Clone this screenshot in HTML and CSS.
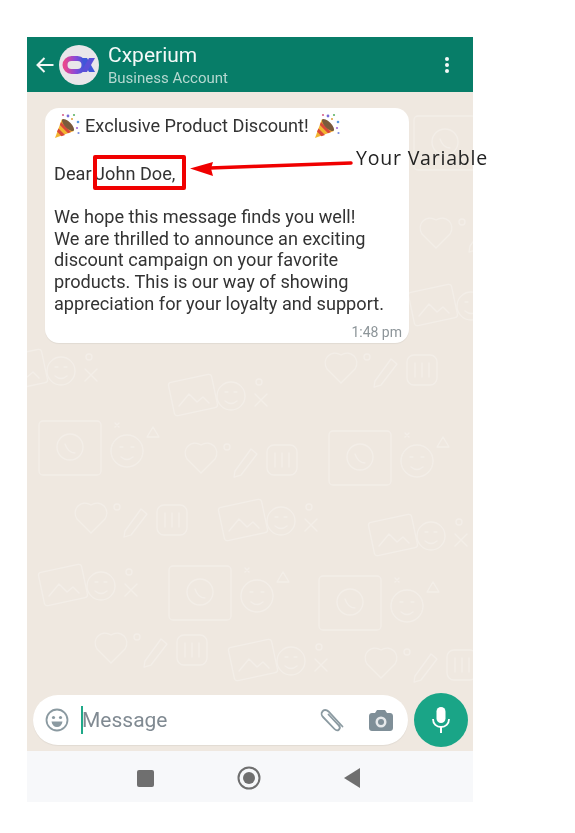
FILE: index.html
```html
<!DOCTYPE html>
<html lang="en">
<head>
  <meta charset="UTF-8">
  <title>Cxperium message preview</title>
  <link rel="stylesheet" href="styles.css">
</head>
<body>
  <svg class="defs" width="0" height="0">
    <defs>
      <g id="popper">
        <path d="M1 25 L8 6 L20 18 Z" fill="#f2b632"/>
        <path d="M4.500 15.500 L11 22 L7.500 23.300 L3 18.500 Z" fill="#d9483b"/>
        <path d="M7 9 L17 19 L14 20.200 L5.800 12 Z" fill="#d9483b"/>
        <ellipse cx="14" cy="12" rx="8" ry="3.200" transform="rotate(45 14 12)" fill="#7a5a3c"/>
        <circle cx="14" cy="3" r="1.400" fill="#7b6cd9"/>
        <circle cx="20" cy="2" r="1.100" fill="#5fb46a"/>
        <circle cx="24" cy="9" r="1.300" fill="#5a9be0"/>
        <circle cx="23" cy="15" r="1.100" fill="#a06cd9"/>
        <circle cx="9" cy="2" r="1.100" fill="#d9638c"/>
        <circle cx="24.500" cy="20" r="1.100" fill="#7b8fe0"/>
        <circle cx="18" cy="6" r="1" fill="#e0a03c"/>
      </g>
      <g id="doodle-a" fill="none" stroke="#f3eee8" stroke-width="1.300" stroke-linecap="round" stroke-linejoin="round">
        <rect x="4" y="6" width="44" height="34" rx="3" transform="rotate(-12 26 23)"/>
        <path d="M12 34 L22 22 L30 30 L36 25 L42 31"/>
        <circle cx="64" cy="24" r="14"/>
        <path d="M58 20 h3 M67 20 h3 M58 29 q6 5 12 0"/>
        <circle cx="92" cy="10" r="3"/>
        <path d="M88 34 l12 -12 M100 34 l-12 -12"/>
      </g>
      <g id="doodle-b" fill="none" stroke="#f3eee8" stroke-width="1.300" stroke-linecap="round" stroke-linejoin="round">
        <path d="M24 8 C34 2 44 12 38 22 L24 36 L10 22 C4 12 14 2 24 8 Z"/>
        <path d="M58 34 L74 12 L80 17 L64 38 L57 40 Z"/>
        <rect x="90" y="8" width="30" height="30" rx="7"/>
        <path d="M98 16 v14 M105 16 v14 M112 16 v14"/>
        <circle cx="50" cy="10" r="3"/>
      </g>
      <g id="doodle-c" fill="none" stroke="#f3eee8" stroke-width="1.300" stroke-linecap="round" stroke-linejoin="round">
        <rect x="2" y="4" width="62" height="54" rx="4"/>
        <circle cx="33" cy="30" r="13"/>
        <path d="M28 27 q3 9 10 9"/>
        <circle cx="90" cy="34" r="16"/>
        <path d="M83 30 h3 M94 30 h3 M84 40 q6 5 12 0"/>
        <path d="M116 10 l6 10 l-12 0 Z"/>
        <path d="M78 6 l4 4 M82 6 l-4 4"/>
      </g>
    </defs>
  </svg>

  <div class="phone">
    <header class="topbar">
      <svg class="back" width="20" height="18" viewBox="0 0 20 18"><path d="M18.500 9 H2.500 M9.500 2 L2.500 9 L9.500 16" fill="none" stroke="#f1f7f5" stroke-width="2"/></svg>
      <div class="avatar">
        <svg width="40" height="40" viewBox="0 0 40 40">
          <defs>
            <linearGradient id="logo" x1="0" y1="0" x2="1" y2="0">
              <stop offset="0" stop-color="#e8468f"/>
              <stop offset="0.550" stop-color="#8a49d8"/>
              <stop offset="1" stop-color="#3f57d8"/>
            </linearGradient>
          </defs>
          <circle cx="20" cy="20" r="20" fill="#e9e6ea"/>
          <rect x="6" y="13.500" width="19" height="13" rx="6.500" fill="none" stroke="url(#logo)" stroke-width="5"/>
          <path d="M22 13 L28 13 L36 27 L30 27 Z" fill="#3f57d8"/>
          <path d="M36 13 L30 13 L22 27 L28 27 Z" fill="#5a4fd8"/>
        </svg>
      </div>
      <div class="contact">
        <div class="contact-name">Cxperium</div>
        <div class="contact-sub">Business Account</div>
      </div>
      <div class="kebab"><i></i><i></i><i></i></div>
    </header>

    <main class="chat">
      <svg class="wallpaper" width="446" height="659" viewBox="0 0 446 659">
        <use href="#doodle-c" x="385" y="20"/>
        <use href="#doodle-b" x="385" y="120"/>
        <use href="#doodle-a" x="380" y="190"/>
        <use href="#doodle-a" x="-30" y="255"/>
        <use href="#doodle-a" x="140" y="280"/>
        <use href="#doodle-b" x="290" y="255"/>
        <use href="#doodle-c" x="10" y="325"/>
        <use href="#doodle-b" x="150" y="345"/>
        <use href="#doodle-c" x="300" y="335"/>
        <use href="#doodle-a" x="190" y="405"/>
        <use href="#doodle-b" x="40" y="405"/>
        <use href="#doodle-a" x="340" y="420"/>
        <use href="#doodle-a" x="10" y="470"/>
        <use href="#doodle-c" x="140" y="470"/>
        <use href="#doodle-c" x="290" y="480"/>
        <use href="#doodle-b" x="60" y="535"/>
        <use href="#doodle-a" x="200" y="545"/>
        <use href="#doodle-b" x="330" y="550"/>
      </svg>

      <article class="bubble">
        <p class="title">
          <svg class="emoji" width="26" height="26" viewBox="0 0 26 26"><use href="#popper"/></svg>
          <span>Exclusive Product Discount!</span>
          <svg class="emoji" width="26" height="26" viewBox="0 0 26 26"><use href="#popper"/></svg>
        </p>
        <p class="dear">Dear <span class="variable">John Doe,</span></p>
        <p class="body-text">We hope this message finds you well!<br>We are thrilled to announce an exciting<br>discount campaign on your favorite<br>products. This is our way of showing<br>appreciation for your loyalty and support.</p>
        <div class="time">1:48 pm</div>
      </article>

      <div class="composer">
        <div class="input">
          <svg class="smile" width="24" height="24" viewBox="0 0 24 24">
            <circle cx="12" cy="12" r="10.500" fill="none" stroke="#8b9aa1" stroke-width="1.800"/>
            <circle cx="8.500" cy="9.500" r="1.600" fill="#8b9aa1"/>
            <circle cx="15.500" cy="9.500" r="1.600" fill="#8b9aa1"/>
            <path d="M6.500 13.500 H17.500 C17 17 15 19 12 19 C9 19 7 17 6.500 13.500 Z" fill="#8b9aa1"/>
          </svg>
          <span class="caret"></span>
          <span class="placeholder">Message</span>
          <svg class="clip" width="26" height="26" viewBox="0 0 26 26">
            <path d="M23 20 L9 5 C7 3 4 3 3 5 C1.500 6.500 2 9 3.500 10.500 L15 22.500 C16.500 24 18.500 24 19.500 23 C20.500 22 20.500 20 19 18.500 L9 8" transform="translate(0.500 -0.500)" fill="none" stroke="#8b9aa1" stroke-width="1.800" stroke-linecap="round"/>
          </svg>
          <svg class="camera" width="24" height="22" viewBox="0 0 24 22">
            <path d="M8 1 H16 L18 4 H21 C22.700 4 24 5.300 24 7 V19 C24 20.700 22.700 22 21 22 H3 C1.300 22 0 20.700 0 19 V7 C0 5.300 1.300 4 3 4 H6 Z" fill="#7f8f98"/>
            <circle cx="12" cy="13" r="5.500" fill="#e6e9eb"/>
            <circle cx="12" cy="13" r="3" fill="#7f8f98"/>
          </svg>
        </div>
        <button class="mic">
          <svg width="20" height="28" viewBox="0 0 20 28">
            <rect x="5.500" y="1" width="9" height="16" rx="4.500" fill="#fff"/>
            <path d="M2 13 C2 18 5.500 21 10 21 C14.500 21 18 18 18 13" fill="none" stroke="#fff" stroke-width="1.800"/>
            <path d="M10 21 V27" stroke="#fff" stroke-width="2"/>
          </svg>
        </button>
      </div>
    </main>

    <nav class="navbar">
      <span class="nav-square"></span>
      <svg width="24" height="24" viewBox="0 0 24 24">
        <circle cx="12" cy="12" r="10.500" fill="none" stroke="#6f6f6f" stroke-width="2"/>
        <circle cx="12" cy="12" r="6" fill="#6f6f6f"/>
      </svg>
      <svg width="16" height="20" viewBox="0 0 16 20"><path d="M16 0 V20 L0 10 Z" fill="#6f6f6f"/></svg>
    </nav>

    <!-- annotation drawn on top of the screenshot -->
    <div class="highlight"></div>
    <svg class="arrow" width="170" height="26" viewBox="0 0 170 26">
      <path d="M161 10 L20 15" stroke="#f00000" stroke-width="3.500" stroke-linecap="round"/>
      <path d="M0 15.500 L23 9 L21 15.500 L23 23 Z" fill="#f00000"/>
    </svg>
    <div class="note">Your Variable</div>
  </div>
</body>
</html>
```
FILE: styles.css
```css
html, body {
  margin: 0;
  background: #fff;
}

body {
  padding: 37px 0 0 27px;
  font-family: Roboto, "Liberation Sans", sans-serif;
}

.defs {
  position: absolute;
}

.phone {
  position: relative;
  width: 446px;
  height: 765px;
  display: flex;
  flex-direction: column;
  filter: blur(0.4px);
}

/* header */
.topbar {
  height: 55px;
  flex: none;
  background: #077d68;
  display: flex;
  align-items: center;
  padding-left: 8px;
  padding-right: 24px;
  color: #fff;
}

.back {
  margin-right: 4px;
}

.avatar {
  width: 40px;
  height: 40px;
  margin-right: 9px;
}

.contact {
  flex: 1;
}

.contact-name {
  font-size: 21px;
  line-height: 24px;
  margin-top: 1px;
  color: #f4f9f8;
}

.contact-sub {
  font-size: 15px;
  line-height: 18px;
  margin-top: 2px;
  color: #b5d8d0;
}

.kebab {
  display: flex;
  flex-direction: column;
  gap: 2px;
}

.kebab i {
  width: 4px;
  height: 4px;
  border-radius: 50%;
  background: #f4f9f8;
}

/* chat */
.chat {
  position: relative;
  flex: 1;
  background: #efe8e0;
  display: flex;
  flex-direction: column;
  justify-content: space-between;
  padding: 16px 5px 4px 18px;
  overflow: hidden;
}

.wallpaper {
  position: absolute;
  left: 0;
  top: 0;
}

.bubble {
  position: relative;
  width: 364px;
  height: 235px;
  box-sizing: border-box;
  background: #fff;
  border-radius: 14px;
  padding: 5px 9px 0;
  color: #333;
  font-size: 18.150px;
  line-height: 21.600px;
  box-shadow: 0 1px 1px rgba(0, 0, 0, 0.06);
}

.bubble p {
  margin: 0;
}

.title {
  display: flex;
  align-items: center;
  gap: 5px;
  height: 26px;
}

.dear {
  margin-top: 24px !important;
}

.variable {
  margin-left: -1px;
}

.body-text {
  margin-top: 21.600px !important;
}

.time {
  position: absolute;
  right: 7px;
  bottom: 3px;
  font-size: 14px;
  line-height: 16px;
  color: #8d9599;
}

/* message input */
.composer {
  position: relative;
  display: flex;
  align-items: center;
  gap: 6px;
}

.input {
  width: 375px;
  height: 50px;
  box-sizing: border-box;
  background: #fff;
  border-radius: 25px;
  display: flex;
  align-items: center;
  padding-left: 12px;
  margin-left: -12px;
  box-shadow: 0 1px 1px rgba(0, 0, 0, 0.06);
}

.smile {
  margin-right: 12px;
}

.caret {
  width: 2px;
  height: 28px;
  background: #1fa888;
}

.placeholder {
  flex: 1;
  font-size: 21px;
  margin-left: -1px;
  color: #808a92;
}

.clip {
  margin-right: 24px;
}

.camera {
  margin-right: 15px;
}

.mic {
  width: 54px;
  height: 54px;
  padding: 0;
  border: none;
  border-radius: 50%;
  background: #1aa587;
  display: flex;
  align-items: center;
  justify-content: center;
}

/* android nav */
.navbar {
  height: 51px;
  box-sizing: border-box;
  flex: none;
  background: #f7f8fa;
  display: flex;
  align-items: center;
  padding: 3px 0 0 110px;
  gap: 83px;
}

.nav-square {
  width: 17px;
  height: 17px;
  border-radius: 2px;
  background: #6f6f6f;
}

/* annotation */
.highlight {
  position: absolute;
  left: 66px;
  top: 118px;
  width: 93px;
  height: 35px;
  border: 4px solid #f00000;
  border-radius: 2px;
  box-sizing: border-box;
}

.arrow {
  position: absolute;
  left: 163px;
  top: 116px;
}

.note {
  position: absolute;
  left: 329px;
  top: 107px;
  font-family: "Open Sans", sans-serif;
  font-size: 19.500px;
  line-height: 28px;
  letter-spacing: 0.800px;
  color: #222;
  white-space: nowrap;
}
```
